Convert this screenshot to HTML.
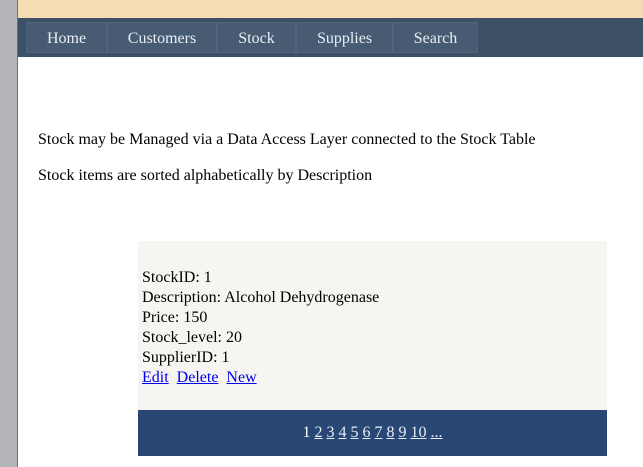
<!DOCTYPE html>
<html><head><style>
body{margin:0;width:643px;height:467px;overflow:hidden;background:#fff;font-family:"Liberation Serif",serif;font-size:16px;position:relative}
.lb{position:absolute;left:0;top:0;width:17px;height:467px;background:#b5b6bb;border-right:1px solid #6b6e75}
.top{position:absolute;left:18px;top:0;right:0;height:18px;background:#f4ddb3}
.nav{position:absolute;left:18px;top:18px;right:0;height:39px;background:#3d5166}
.it{position:absolute;top:4px;height:31px;background:#475c73;border:1px solid #51667d;box-sizing:border-box;color:#e8eef5;text-align:center;line-height:31px}
p{position:absolute;left:38px;margin:0;white-space:nowrap}
.panel{position:absolute;left:138px;top:241px;width:469px;height:169px;background:#f6f5f1}
.lines{position:absolute;left:4px;top:27px;line-height:20px}
a{color:#00e;text-decoration:underline}
.foot{position:absolute;left:138px;top:410px;width:469px;height:46px;background:#284775;color:#fff;text-align:center;line-height:46px}
.foot a{color:#e8eef5}
</style></head><body>
<div class="lb"></div><div class="top"></div>
<div class="nav">
<div class="it" style="left:8px;width:81px">Home</div>
<div class="it" style="left:89px;width:110px">Customers</div>
<div class="it" style="left:199px;width:79px">Stock</div>
<div class="it" style="left:278px;width:97px">Supplies</div>
<div class="it" style="left:375px;width:85px">Search</div>
</div>
<p style="top:131px">Stock may be Managed via a Data Access Layer connected to the Stock Table</p>
<p style="top:167px">Stock items are sorted alphabetically by Description</p>
<div class="panel"><div class="lines">StockID: 1<br>Description: Alcohol Dehydrogenase<br>Price: 150<br>Stock_level: 20<br>SupplierID: 1<br><a>Edit</a>&nbsp; <a>Delete</a>&nbsp; <a>New</a></div></div>
<div class="foot">1 <a>2</a> <a>3</a> <a>4</a> <a>5</a> <a>6</a> <a>7</a> <a>8</a> <a>9</a> <a>10</a> <a>...</a></div>
</body></html>
